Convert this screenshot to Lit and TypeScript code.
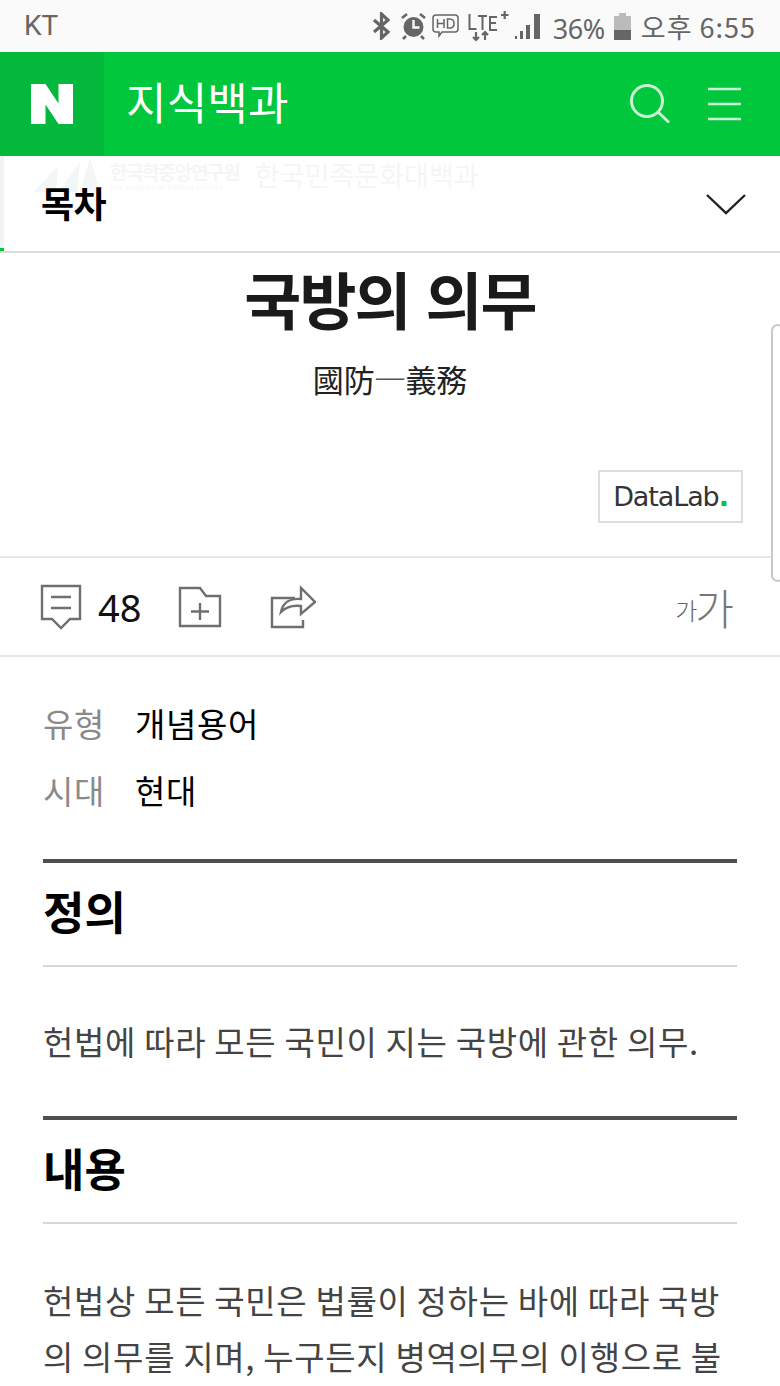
import { LitElement, html, css } from "lit";
import { customElement } from "lit/decorators.js";

@customElement("app-root")
export class AppRoot extends LitElement {
  static styles = css`
    :host {
      display: block;
      width: 780px;
      height: 1386px;
      overflow: hidden;
      position: relative;
      background: #fff;
      font-family: "Noto Sans CJK KR", "Noto Sans", sans-serif;
      color: #111;
    }
    .status {
      height: 52px;
      background: #fafafa;
      display: flex;
      align-items: center;
      padding: 0 24px 0 24px;
      color: #666;
    }
    .carrier { font: 400 28px Roboto, sans-serif; flex: 1; margin-top: -1px; }
    .status-right { display: flex; align-items: center; height: 52px; }
    .status-right svg { display: block; }
    .pct { font: 400 27px "Noto Sans", sans-serif; letter-spacing: -0.4px; margin: 4px 0 0 12px; }
    .clock { font-size: 27px; margin: 1px 0 0 10px; white-space: nowrap; letter-spacing: 1px; }
    .header {
      height: 104px;
      background: #00c73c;
      display: flex;
      align-items: center;
      color: #fff;
    }
    .logo {
      width: 104px;
      height: 104px;
      background: #03b83a;
      display: flex;
      align-items: center;
      justify-content: center;
    }
    .brand { font-size: 44px; font-weight: 400; margin: -6px 0 0 22px; flex: 1; line-height: 1; letter-spacing: 0.2px; }
    .hicons { display: flex; align-items: center; gap: 38px; padding-right: 39px; }
    .toc {
      box-sizing: border-box;
      height: 97px;
      border-bottom: 2px solid #dcdcdc;
      position: relative;
      display: flex;
      align-items: center;
      justify-content: space-between;
      padding: 0 34px 0 41px;
      overflow: hidden;
    }
    .toc-title { font-size: 36px; font-weight: 700; letter-spacing: -0.6px; position: relative; margin-top: -3px; color: #000; }
    .ghost {
      position: absolute;
      left: 110px;
      top: 0;
      font-size: 27px;
      line-height: 38px;
      color: #f4f6f5;
      white-space: nowrap;
      display: flex;
      align-items: flex-start;
    }
    .ghost-sub { width: 145px; display: flex; flex-direction: column; font-size: 19px; font-weight: 700; line-height: 24px; letter-spacing: -1.3px; padding-top: 4px; }
    .ghost-sub i { font-style: normal; font-weight: 400; font-size: 6px; line-height: 7px; letter-spacing: 0.5px; }
    .mountain { position: absolute; left: 34px; top: 2px; }
    .edge { position: absolute; left: 0; top: 0; bottom: 0; width: 4px; background: #f1f3f4; }
    .edge::after { content: ""; position: absolute; left: 0; bottom: 0; width: 4px; height: 3px; background: #00c73c; }
    .hero { box-sizing: border-box; height: 303px; position: relative; text-align: center; }
    h1 { margin: 0; font-size: 62px; font-weight: 700; line-height: 90px; letter-spacing: -2px; word-spacing: 4px; color: #1a1a1a; }
    .hanja { font-size: 31px; line-height: 44px; margin-top: 14px; color: #222; letter-spacing: -0.1px; }
    .hanja span { display: inline-block; transform: scaleY(0.55); color: #555; }
    .datalab {
      position: absolute;
      right: 37px;
      top: 217px;
      box-sizing: border-box;
      width: 145px;
      height: 53px;
      border: 2px solid #dedede;
      display: flex;
      align-items: center;
      justify-content: center;
      font: 400 27px "DejaVu Sans", sans-serif;
      letter-spacing: -1.1px;
      color: #333;
    }
    .datalab b { color: #00c73c; font-weight: 700; }
    .actions {
      box-sizing: border-box;
      height: 101px;
      border-top: 2px solid #e6e6e6;
      border-bottom: 2px solid #e6e6e6;
      display: flex;
      align-items: center;
      padding: 0 46px 0 40px;
    }
    .count { font: 400 38px "Noto Sans", sans-serif; margin: 0 37px 0 16px; color: #111; }
    .spacer { flex: 1; }
    .fs { color: #777; display: flex; align-items: flex-end; font-weight: 300; }
    .fs span { font-size: 24px; line-height: 1; margin-right: -2px; padding-bottom: 6px; color: #666; }
    .fs strong { font-size: 42px; font-weight: 300; line-height: 1; }
    .handle {
      position: absolute;
      right: -4px;
      top: 324px;
      width: 9px;
      height: 254px;
      border: 2px solid #c8c8c8;
      border-radius: 8px;
      background: #fff;
    }
    .body { padding: 43px 43px 0 43px; }
    .meta { display: grid; grid-template-columns: 92px 1fr; row-gap: 21px; font-size: 33px; line-height: 46px; margin: 0 0 46px; letter-spacing: 0.6px; }
    .meta dt { color: #8a8a8a; }
    .meta dd { margin: 0; color: #000; }
    .sec { box-sizing: border-box; border-top: 4px solid #4f4f4f; border-bottom: 2px solid #d8d8d8; height: 108px; padding-bottom: 7px; display: flex; align-items: center; }
    h2 { margin: 0; font-size: 45px; font-weight: 700; color: #000; line-height: 1; }
    p { margin: 0; font-size: 33px; line-height: 56px; color: #444; white-space: nowrap; letter-spacing: 0.67px; }
    .def { padding: 46px 0 47px; }
    .con { padding-top: 48px; }
  `;

  render() {
    return html`
      <div class="status">
        <div class="carrier">KT</div>
        <div class="status-right">
          <svg width="18" height="28" viewBox="0 0 18 28" fill="none" stroke="#666" stroke-width="3.2"><path d="M2 8l14 12-6.500 6V2L16 8 2 20"/></svg>
          <svg width="25" height="28" viewBox="0 0 25 28" style="margin-left:11px"><circle cx="12.500" cy="15" r="10" fill="#666"/><path d="M12.500 8v7.500h6" fill="none" stroke="#fafafa" stroke-width="2.400"/><path d="M1 6l5-4M24 6l-5-4M5 24l-3 3M20 24l3 3" stroke="#666" stroke-width="2.600" fill="none"/></svg>
          <svg width="27" height="26" viewBox="0 0 27 26" style="margin-left:6px" fill="none" stroke="#666" stroke-width="1.500"><path d="M4 2h19a3 3 0 0 1 3 3v11a3 3 0 0 1-3 3H10l-3 4v-4H4a3 3 0 0 1-3-3V5a3 3 0 0 1 3-3z"/><path d="M5.500 6v9M12 6v9M5.500 10.500H12M15.500 6v9h2.500a4 4 0 0 0 4-4.500A4 4 0 0 0 18 6z"/></svg>
          <svg width="41" height="32" viewBox="0 0 41 32" style="margin-left:9px" fill="none" stroke="#666"><path d="M1.500 4v15h7M10 6h9M14.500 6v14M29 7h-7v13h7M22 13h6" stroke-width="2"/><path d="M33 5h7.500M36.700 1v8" stroke-width="2.200"/><path d="M8 22v8M5 27l3 3 3-3M17 30v-8M14 25l3-3 3 3" stroke-width="2.200"/></svg>
          <svg width="26" height="28" viewBox="0 0 26 28" style="margin-left:6px" fill="#666"><path d="M0 24h2v3H0zM5 19h3v8H5zM11 13h4v14h-4zM19 2h6v25h-6z"/></svg>
          <span class="pct">36%</span>
          <svg width="17" height="28" viewBox="0 0 17 28" style="margin-left:9px"><path d="M5 1h7v3h5v24H0V4h5z" fill="#bbb"/><rect y="18" width="17" height="10" fill="#666"/></svg>
          <span class="clock">오후 6:55</span>
        </div>
      </div>
      <div class="header">
        <div class="logo">
          <svg width="42" height="40" viewBox="0 0 42 40"><path d="M0 0h14.500L27.500 19.500V0H42v40H27.500L14.500 20.500V40H0z" fill="#fff"/></svg>
        </div>
        <div class="brand">지식백과</div>
        <div class="hicons">
          <svg width="40" height="40" viewBox="0 0 40 40" fill="none" stroke="#c9f3d5" stroke-width="3"><circle cx="17" cy="17" r="15.500"/><path d="M28 28l11 10.500"/></svg>
          <svg width="33" height="34" viewBox="0 0 33 34" fill="none" stroke="#c9f3d5" stroke-width="2.600"><path d="M0 2h33M0 17h33M0 32h33"/></svg>
        </div>
      </div>
      <div class="toc">
        <div class="edge"></div>
        <svg class="mountain" width="66" height="34" viewBox="0 0 66 34" fill="#f3f6f7"><path d="M0 34L24 8l-2 26zM24 34L46 4l-3 30zM46 34L56 0l10 34z"/></svg>
        <div class="ghost">
          <div class="ghost-sub">한국학중앙연구원<i>THE ACADEMY OF KOREAN STUDIES</i></div>
          <div>한국민족문화대백과</div>
        </div>
        <div class="toc-title">목차</div>
        <svg width="40" height="22" viewBox="0 0 40 22" fill="none" stroke="#222" stroke-width="2.400"><path d="M1 2l19 18L39 2"/></svg>
      </div>
      <div class="hero">
        <h1>국방의 의무</h1>
        <div class="hanja">國防<span>一</span>義務</div>
        <div class="datalab">DataLab<b>.</b></div>
      </div>
      <div class="actions">
        <svg width="42" height="46" viewBox="0 0 42 46" fill="none" stroke="#6f6f6f" stroke-width="2.400"><path d="M2 2h38v33H30l-9 9-9-9H2z"/><path d="M11 13h20M11 24h20"/></svg>
        <span class="count">48</span>
        <svg width="44" height="42" viewBox="0 0 44 42" fill="none" stroke="#6f6f6f" stroke-width="2.400"><path d="M2 2h20l6 8h14v30H2z"/><path d="M22 17v17M13 25.500h18"/></svg>
        <svg width="46" height="44" viewBox="0 0 46 44" fill="none" stroke="#6f6f6f" stroke-width="2.400" style="margin-left:48px"><path d="M25 13H2v29h31v-7"/><path d="M11 27c2-10 10-14 20-13V3l14 14-14 12v-8c-9-1-15 1-20 6z"/></svg>
        <div class="spacer"></div>
        <div class="fs"><span>가</span><strong>가</strong></div>
      </div>
      <div class="handle"></div>
      <div class="body">
        <dl class="meta">
          <dt>유형</dt><dd>개념용어</dd>
          <dt>시대</dt><dd>현대</dd>
        </dl>
        <div class="sec"><h2>정의</h2></div>
        <div class="def"><p>헌법에 따라 모든 국민이 지는 국방에 관한 의무.</p></div>
        <div class="sec"><h2>내용</h2></div>
        <div class="con"><p>헌법상 모든 국민은 법률이 정하는 바에 따라 국방</p><p>의 의무를 지며, 누구든지 병역의무의 이행으로 불</p></div>
      </div>
    `;
  }
}
